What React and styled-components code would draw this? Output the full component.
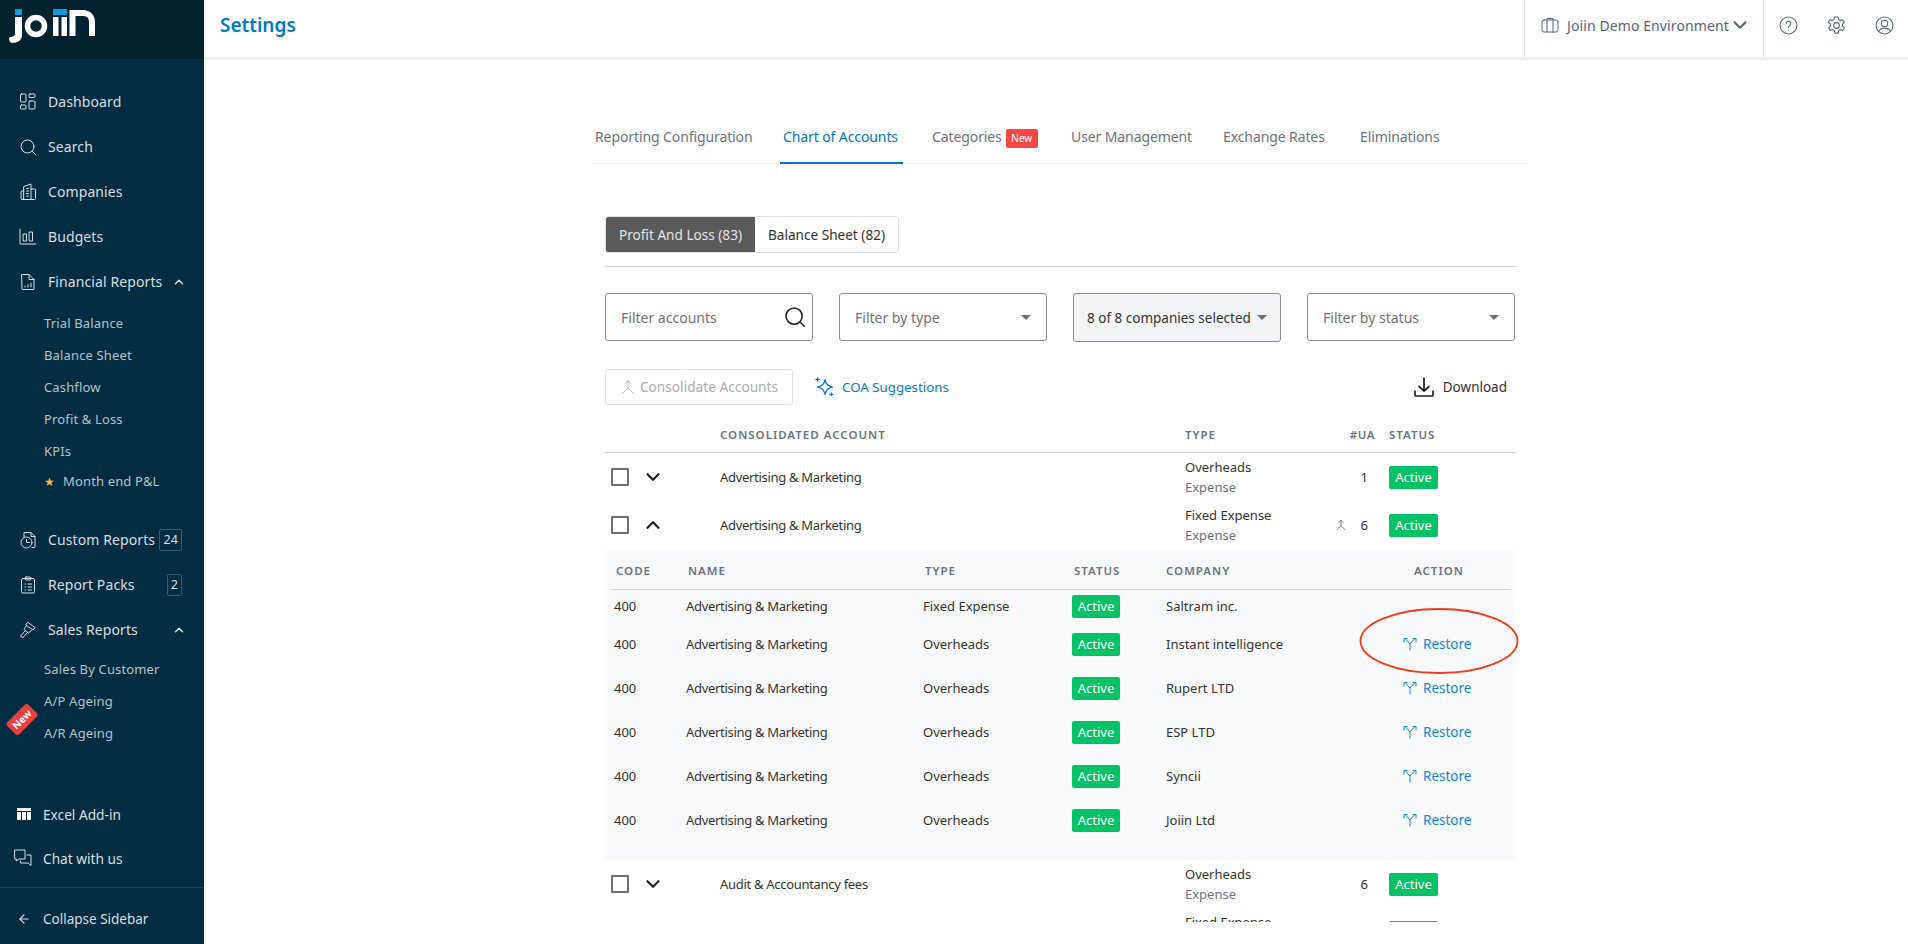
import React from 'react';
import styled, { createGlobalStyle } from 'styled-components';
import { ChevronDown, ChevronUp, ArrowLeft } from 'lucide-react';

const Global = createGlobalStyle`
  html, body { margin: 0; padding: 0; background: #fff; }
  body { font-family: "Noto Sans", "Liberation Sans", sans-serif; overflow: hidden; }
  * { box-sizing: border-box; }
`;

const Page = styled.div`
  display: flex;
  width: 1908px;
  height: 944px;
  overflow: hidden;
  position: relative;
`;

const Sidebar = styled.aside`
  width: 204px;
  flex: none;
  height: 944px;
  background: #022c42;
  display: flex;
  flex-direction: column;
`;
const LogoBar = styled.div`
  height: 59px;
  flex: none;
  background: #03222f;
`;
const NavTop = styled.nav`
  display: flex;
  flex-direction: column;
  padding-top: 20px;
`;
const NavItem = styled.div`
  height: 45px;
  display: flex;
  align-items: center;
  padding: 0 18px 0 19px;
  color: #d6dfe4;
  font-size: 14px;
  letter-spacing: 0.1px;
`;
const NavIcon = styled.span`
  width: 29px;
  flex: none;
  display: flex;
  align-items: center;
`;
const NavLabel = styled.span`
  flex: 1;
  white-space: nowrap;
`;
const Count = styled.span`
  height: 22px;
  padding: 0 3px;
  margin-right: 4px;
  border: 1px solid #3d5a6b;
  border-radius: 2px;
  font-size: 12.5px;
  line-height: 20px;
`;
const SubList = styled.div`
  display: flex;
  flex-direction: column;
  position: relative;
  margin-top: ${p => p.$mt}px;
  margin-bottom: ${p => p.$mb || 0}px;
`;
const SubItem = styled.div`
  height: ${p => p.$h || 32}px;
  display: flex;
  align-items: center;
  padding-left: 44px;
  color: #b4c2ca;
  font-size: 13px;
  letter-spacing: 0.15px;
`;
const Star = styled.span`
  color: #f5b83d;
  font-size: 12px;
  width: 19px;
  flex: none;
`;
const NewRibbon = styled.span`
  position: absolute;
  left: 7px;
  top: 58px;
  width: 30px;
  height: 17px;
  background: #e8403f;
  border-radius: 3px;
  color: #fff;
  font-size: 10px;
  font-weight: 700;
  line-height: 17px;
  text-align: center;
  transform: rotate(-45deg);
`;
const NavBottom = styled.div`
  margin-top: auto;
  display: flex;
  flex-direction: column;
`;
const FootItem = styled.div`
  height: 44px;
  display: flex;
  align-items: center;
  padding-left: ${p => p.$pad || 14}px;
  color: #d6dfe4;
  font-size: 13.7px;
`;
const FootIcon = styled.span`
  width: ${p => p.$w || 29}px;
  flex: none;
  display: flex;
  align-items: center;
`;
const Divider = styled.div`
  height: 1px;
  background: #1f4459;
  margin-top: 7px;
`;
const CollapseItem = styled(FootItem)`
  height: 56px;
  padding-top: 6px;
  padding-left: 17px;
  font-size: 13.5px;
`;

const Main = styled.main`
  flex: 1;
  display: flex;
  flex-direction: column;
  min-width: 0;
  position: relative;
`;
const TopBar = styled.header`
  height: 60px;
  flex: none;
  display: flex;
  align-items: stretch;
  border-bottom: 3px solid #edeff5;
  background: #fff;
`;
const Title = styled.h1`
  flex: 1;
  margin: 0;
  padding-left: 16px;
  font-size: 19px;
  line-height: 50px;
  font-weight: 600;
  color: #0379c3;
`;
const EnvBox = styled.div`
  width: 240px;
  flex: none;
  border-left: 1px solid #dfe1e6;
  border-right: 1px solid #dfe1e6;
  display: flex;
  align-items: center;
  gap: 8px;
  padding: 0 0 7px 16px;
  color: #55657a;
  font-size: 14px;
  letter-spacing: 0.1px;
`;
const EnvChevron = styled.span`
  display: flex;
  margin-left: -8px;
`;
const TopIcons = styled.div`
  width: 144px;
  flex: none;
  display: flex;
  align-items: center;
  gap: 29px;
  padding: 0 0 7px 15px;
  color: #55657a;
`;
const Content = styled.div`
  width: 960px;
  margin-left: 381px;
  padding: 0 29px 0 20px;
  height: 862px;
  overflow: hidden;
  flex: none;
  position: relative;
`;
const Tabs = styled.div`
  display: flex;
  height: 54px;
  margin-left: -13px;
  width: 936px;
  margin-top: 50px;
  border-bottom: 1px solid #f3f4f6;
`;
const Tab = styled.div`
  width: ${p => p.$w}px;
  flex: none;
  height: 54px;
  padding: 18px 3px 0;
  margin-right: ${p => p.$mr}px;
  display: flex;
  align-items: flex-start;
  font-size: 14px;
  letter-spacing: -0.1px;
  line-height: 18px;
  color: ${p => (p.$active ? '#0379c3' : '#6b7280')};
  border-bottom: 2px solid ${p => (p.$active ? '#0379c3' : 'transparent')};
  white-space: nowrap;
`;
const NewTag = styled.span`
  height: 19px;
  width: 32px;
  flex: none;
  margin-left: 4px;
  margin-top: 1px;
  border-radius: 2px;
  background: #f64747;
  color: #fff;
  font-size: 10px;
  letter-spacing: 0;
  line-height: 19px;
  text-align: center;
`;
const Segment = styled.div`
  display: flex;
  width: 294px;
  margin-top: 52px;
  height: 37px;
  border: 1px solid #dfe1e5;
  border-radius: 3px;
  overflow: hidden;
`;
const SegBtn = styled.div`
  width: ${p => p.$w}px;
  display: flex;
  align-items: center;
  justify-content: center;
  font-size: 13.6px;
  white-space: nowrap;
  background: ${p => (p.$active ? '#5a5a5a' : '#fff')};
  color: ${p => (p.$active ? '#e5e5e5' : '#333')};
`;
const Rule = styled.div`
  height: 1px;
  background: #d5d6dc;
  margin-top: 13px;
`;
const Filters = styled.div`
  display: grid;
  grid-template-columns: repeat(4, 208px);
  justify-content: space-between;
  width: 910px;
  margin-top: 26px;
  align-items: start;
`;
const Field = styled.div`
  height: ${p => (p.$filled ? 49 : 48)}px;
  border: 1px solid #8d8d8d;
  border-radius: 3px;
  display: flex;
  align-items: center;
  justify-content: space-between;
  padding: 0 ${p => (p.$filled ? 13 : 15)}px;
  font-size: ${p => (p.$filled ? 13.5 : 14)}px;
  background: ${p => (p.$filled ? '#f3f4f6' : '#fff')};
  color: ${p => (p.$filled ? '#333' : '#6f7377')};
`;
const LensWrap = styled.span`
  display: flex;
  margin-right: -8px;
`;
const Caret = styled.span`
  width: 0;
  height: 0;
  border-left: 5px solid transparent;
  border-right: 5px solid transparent;
  border-top: 5px solid #6b6f74;
`;
const Actions = styled.div`
  display: flex;
  align-items: center;
  margin-top: 26px;
  height: 37px;
`;
const GhostBtn = styled.div`
  width: 188px;
  height: 36px;
  border: 1px solid #e2e3e5;
  border-radius: 3px;
  display: flex;
  align-items: center;
  justify-content: center;
  gap: 4px;
  color: #a9adb0;
  font-size: 13.7px;
`;
const LinkBtn = styled.div`
  margin-left: 22px;
  display: flex;
  align-items: center;
  gap: 8px;
  color: #0a7cc7;
  font-size: 13.3px;
`;
const Download = styled.div`
  margin-left: auto;
  margin-right: 9px;
  display: flex;
  align-items: center;
  gap: 8px;
  color: #333;
  font-size: 13.5px;
`;
const Head = styled.div`
  display: grid;
  grid-template-columns: 115px 465px 130px 60px 1fr;
  height: 36px;
  margin-top: 12px;
  padding-top: 10px;
  border-bottom: 1px solid #d5d6dc;
  font-size: 11.5px;
  line-height: 16px;
  font-weight: 600;
  letter-spacing: 1px;
  color: #6b7280;
`;
const HeadUA = styled.span`
  text-align: right;
  letter-spacing: 0.5px;
`;
const HeadStatus = styled.span`
  padding-left: 14px;
`;
const Row = styled.div`
  display: grid;
  grid-template-columns: 37px 78px 465px 130px 60px 1fr;
  height: 48px;
  align-items: center;
  font-size: 13px;
  color: #333;
`;
const Check = styled.span`
  width: 18px;
  height: 18px;
  margin-left: 6px;
  border: 2px solid #6f6f6f;
  border-radius: 1px;
  display: block;
`;
const Name = styled.span`
  letter-spacing: -0.3px;
  white-space: nowrap;
`;
const TypeCell = styled.div`
  display: flex;
  flex-direction: column;
  gap: 3px;
  line-height: 17px;
`;
const Sub = styled.span`
  color: #6b7280;
`;
const UaCell = styled.div`
  display: flex;
  justify-content: flex-end;
  align-items: center;
  gap: 14px;
  padding-right: 7px;
`;
const BadgeCell = styled.div`
  display: flex;
  align-items: center;
`;
const Badge = styled.span`
  display: block;
  width: ${p => p.$w || 49}px;
  height: 23px;
  margin-left: ${p => p.$ml ?? 14}px;
  border-radius: 2px;
  background: #05c168;
  color: #fff;
  font-size: 13px;
  line-height: 23px;
  text-align: center;
`;
const Panel = styled.div`
  height: 310px;
  margin-top: 1px;
  width: 910px;
  background: #f9fafb;
  padding: 0 4px 0 6px;
`;
const InnerHead = styled.div`
  display: grid;
  grid-template-columns: 72px 237px 149px 92px 248px 1fr;
  height: 40px;
  align-items: center;
  padding: 2px 0 0 5px;
  border-bottom: 1px solid #d5d6dc;
  font-size: 11.5px;
  font-weight: 600;
  letter-spacing: 1px;
  color: #6b7280;
`;
const InnerRow = styled.div`
  display: grid;
  grid-template-columns: 72px 237px 149px 94px 237px 1fr;
  height: ${p => p.$h || 44}px;
  align-items: center;
  padding-left: 3px;
  font-size: 13px;
  color: #333;
`;
const Restore = styled.span`
  display: flex;
  align-items: center;
  gap: 6px;
  color: #1487cf;
  font-size: 13.5px;
`;
const Circle = styled.svg`
  position: absolute;
  left: 1155px;
  top: 608px;
`;

const Logo = () => (
  <svg width="100" height="50" viewBox="0 0 100 50">
    <rect x="15" y="9" width="7" height="6" fill="#0a9bd8" />
    <path d="M15 17h7v18c0 5-4 8-10 8l-2-1c-1-1-1-5 0-5 3 0 5-1 5-4z" fill="#fff" />
    <circle cx="36" cy="26" r="8.500" fill="none" stroke="#fff" strokeWidth="5.500" />
    <rect x="53" y="9" width="14" height="6" fill="#0a9bd8" />
    <rect x="53" y="17" width="5.500" height="19" fill="#fff" />
    <rect x="61.500" y="17" width="5.500" height="19" fill="#fff" />
    <path d="M69.500 36V10h13c8 0 12.500 5 12.500 12v14h-6V22c0-4-2-6-6.500-6H75.500v20z" fill="#fff" />
  </svg>
);

const S = ({ children, size = 18, sw = 1, vb = 18, color = 'currentColor' }) => (
  <svg width={size} height={size} viewBox={`0 0 ${vb} ${vb}`} fill="none" stroke={color} strokeWidth={sw} strokeLinecap="round" strokeLinejoin="round">{children}</svg>
);

const Icons = {
  dash: <S><rect x="1.500" y="1" width="5.500" height="8" rx="1"/><rect x="10" y="1" width="6" height="3.500" rx="1"/><rect x="1.500" y="12" width="5.500" height="4" rx="1"/><rect x="10" y="8" width="6" height="8" rx="1"/></S>,
  search: <S><circle cx="8.500" cy="8.500" r="6.500"/><path d="M13.500 13.500l3 3"/></S>,
  comp: <S><path d="M5 3.500l7-2.500v15.500H5zM12 6h3.500a1 1 0 0 1 1 1v8.500a1 1 0 0 1-1 1H3a1 1 0 0 1-1-1V9a1 1 0 0 1 1-1h2"/><path d="M7.500 5.500h2M7.500 8h2M7.500 10.500h2M7.500 13h2"/></S>,
  budget: <S><path d="M1 1v14.500a.5.5 0 0 0 .5.5H17"/><rect x="4.500" y="6" width="3" height="7"/><rect x="10.500" y="4" width="3" height="9"/></S>,
  report: <S><path d="M3 1.500h7l5 5v9.500a.5.5 0 0 1-.5.5h-11a.5.5 0 0 1-.5-.5zM10 1.500V6.500h5"/><path d="M6 14v-1M9 14v-2.500M12 14v-4"/></S>,
  custom: <S><path d="M5 6V1.500h7l4 4v10a1 1 0 0 1-1 1h-2M12 1.500v4h4"/><circle cx="7.500" cy="11.500" r="5.500"/><path d="M7.500 8.500v3h3"/></S>,
  packs: <S><rect x="2.500" y="2.500" width="13" height="14.500" rx="1.500"/><rect x="6" y="1" width="6" height="3" rx="1"/><path d="M6 8h.5M9 8h3.500M6 11h.5M9 11h3.500M6 14h.5M9 14h3.500"/></S>,
  sales: <S><path d="M9 1.500l7 5-2 2.500-7-5zM7.500 4.500l-2.500 4 4.500 3.500 3-2.500M6.500 9.500L1.500 15l2 2 5-5.500"/></S>,
  excel: <svg width="14" height="12" viewBox="0 0 14 12" fill="#fff"><rect x="0" y="0" width="14" height="3"/><rect x="0" y="4" width="4" height="8"/><rect x="5" y="4" width="4" height="8"/><rect x="10" y="4" width="4" height="8"/></svg>,
  chat: <S><path d="M1 1h10v9H5l-3 2 .5-2H1zM13 6h4v10.500l-3-2.500H6.500v-2"/></S>,
  briefcase: <S><rect x="1" y="4" width="16" height="12" rx="2"/><path d="M6 16V2.500h6V16"/></S>,
  help: <S size={19}><circle cx="9" cy="9" r="8"/><path d="M6.800 7a2.200 2.200 0 1 1 3.300 2c-.8.5-1.100.9-1.100 1.800"/><path d="M9 13v.2"/></S>,
  gear: <S size={19}><circle cx="9" cy="9" r="2.700"/><path d="M7.500 1h3l.5 2.300 1.700 1 2.200-.8 1.500 2.600-1.700 1.500v2l1.700 1.500-1.500 2.600-2.200-.8-1.700 1-.5 2.300h-3l-.5-2.300-1.700-1-2.200.8-1.500-2.600 1.700-1.500v-2L1.100 6.100l1.500-2.600 2.200.8 1.700-1z"/></S>,
  user: <S size={19}><circle cx="9" cy="9" r="8"/><circle cx="9" cy="7" r="3"/><path d="M3.500 14.500c1-2 3-3 5.500-3s4.500 1 5.500 3"/></S>,
  lens: <S size={20} sw={1.400} color="#222"><circle cx="8.200" cy="8.200" r="7.300"/><path d="M13.500 13.500l3.800 3.800"/></S>,
  merge: (c, s = 16) => <S size={s} color={c}><path d="M3 16l6-6 6 6M9 10V2M6 5l3-3 3 3"/></S>,
  split: <S size={14} vb={14} color="#1487cf"><path d="M7 13V7L2.500 2M7 7l4.500-5M1 5V1.500h3M13 5V1.500h-3"/></S>,
  spark: <S size={19} sw={1.200} color="#0a7cc7"><path d="M9.500 2.500c.7 4.500 2.500 6.300 7 7-4.500.7-6.300 2.500-7 7-.7-4.500-2.500-6.300-7-7 4.500-.7 6.300-2.500 7-7z"/><path d="M2.500 .8v3M1 2.300h3M15.500 15v3M14 16.500h3"/></S>,
  down: <S size={22} vb={22} sw={1.700} color="#222"><path d="M11 2v13M6 10.500l5 4.500 5-4.500M2 15v4a1 1 0 0 0 1 1h16a1 1 0 0 0 1-1v-4"/></S>,
};

const restoreRows = ['Instant intelligence', 'Rupert LTD', 'ESP LTD', 'Syncii', 'Joiin Ltd'];

const InnerValues = ({ type, company, action, h }) => (
  <InnerRow $h={h}>
    <span>400</span>
    <Name>Advertising &amp; Marketing</Name>
    <span>{type}</span>
    <BadgeCell><Badge $ml={0} $w={48}>Active</Badge></BadgeCell>
    <span>{company}</span>
    {action ? <Restore>{Icons.split}Restore</Restore> : <span />}
  </InnerRow>
);

const AccountRow = ({ name, type, ua, up, merged }) => (
  <Row>
    <Check />
    {up ? <ChevronUp size={22} strokeWidth={2.500} color="#222" /> : <ChevronDown size={22} strokeWidth={2.500} color="#222" />}
    <Name>{name}</Name>
    <TypeCell><span>{type}</span><Sub>Expense</Sub></TypeCell>
    <UaCell>{merged && Icons.merge('#444', 12)}<span>{ua}</span></UaCell>
    <BadgeCell><Badge>Active</Badge></BadgeCell>
  </Row>
);

export default function App() {
  return (
    <Page>
      <Global />
      <Sidebar>
        <LogoBar><Logo /></LogoBar>
        <NavTop>
          <NavItem><NavIcon>{Icons.dash}</NavIcon><NavLabel>Dashboard</NavLabel></NavItem>
          <NavItem><NavIcon>{Icons.search}</NavIcon><NavLabel>Search</NavLabel></NavItem>
          <NavItem><NavIcon>{Icons.comp}</NavIcon><NavLabel>Companies</NavLabel></NavItem>
          <NavItem><NavIcon>{Icons.budget}</NavIcon><NavLabel>Budgets</NavLabel></NavItem>
          <NavItem><NavIcon>{Icons.report}</NavIcon><NavLabel>Financial Reports</NavLabel><ChevronUp size={14} strokeWidth={2.500} /></NavItem>
          <SubList $mt={3} $mb={22}>
            <SubItem>Trial Balance</SubItem>
            <SubItem>Balance Sheet</SubItem>
            <SubItem>Cashflow</SubItem>
            <SubItem>Profit &amp; Loss</SubItem>
            <SubItem>KPIs</SubItem>
            <SubItem $h={28}><Star>★</Star>Month end P&amp;L</SubItem>
          </SubList>
          <NavItem><NavIcon>{Icons.custom}</NavIcon><NavLabel>Custom Reports</NavLabel><Count>24</Count></NavItem>
          <NavItem><NavIcon>{Icons.packs}</NavIcon><NavLabel>Report Packs</NavLabel><Count>2</Count></NavItem>
          <NavItem><NavIcon>{Icons.sales}</NavIcon><NavLabel>Sales Reports</NavLabel><ChevronUp size={14} strokeWidth={2.500} /></NavItem>
          <SubList $mt={1}>
            <SubItem>Sales By Customer</SubItem>
            <SubItem>A/P Ageing</SubItem>
            <SubItem>A/R Ageing</SubItem>
            <NewRibbon>New</NewRibbon>
          </SubList>
        </NavTop>
        <NavBottom>
          <FootItem $pad={17}><FootIcon $w={26}>{Icons.excel}</FootIcon>Excel Add-in</FootItem>
          <FootItem><FootIcon>{Icons.chat}</FootIcon>Chat with us</FootItem>
          <Divider />
          <CollapseItem><FootIcon $w={26}><ArrowLeft size={14} strokeWidth={2} /></FootIcon>Collapse Sidebar</CollapseItem>
        </NavBottom>
      </Sidebar>
      <Main>
        <TopBar>
          <Title>Settings</Title>
          <EnvBox>{Icons.briefcase}Joiin Demo Environment<EnvChevron><ChevronDown size={22} strokeWidth={2.200} /></EnvChevron></EnvBox>
          <TopIcons>{Icons.help}{Icons.gear}{Icons.user}</TopIcons>
        </TopBar>
        <Content>
          <Tabs>
            <Tab $w={161} $mr={27}>Reporting Configuration</Tab>
            <Tab $w={123} $mr={26} $active>Chart of Accounts</Tab>
            <Tab $w={113} $mr={26}>Categories<NewTag>New</NewTag></Tab>
            <Tab $w={125} $mr={27}>User Management</Tab>
            <Tab $w={110} $mr={27}>Exchange Rates</Tab>
            <Tab $w={90} $mr={0}>Eliminations</Tab>
          </Tabs>
          <Segment>
            <SegBtn $active $w={149}>Profit And Loss (83)</SegBtn>
            <SegBtn $w={143}>Balance Sheet (82)</SegBtn>
          </Segment>
          <Rule />
          <Filters>
            <Field>Filter accounts<LensWrap>{Icons.lens}</LensWrap></Field>
            <Field>Filter by type<Caret /></Field>
            <Field $filled>8 of 8 companies selected<Caret /></Field>
            <Field>Filter by status<Caret /></Field>
          </Filters>
          <Actions>
            <GhostBtn>{Icons.merge('#a9adb0')}Consolidate Accounts</GhostBtn>
            <LinkBtn>{Icons.spark}COA Suggestions</LinkBtn>
            <Download>{Icons.down}Download</Download>
          </Actions>
          <Head>
            <span />
            <span>CONSOLIDATED ACCOUNT</span>
            <span>TYPE</span>
            <HeadUA>#UA</HeadUA>
            <HeadStatus>STATUS</HeadStatus>
          </Head>
          <AccountRow name="Advertising & Marketing" type="Overheads" ua="1" />
          <AccountRow name="Advertising & Marketing" type="Fixed Expense" ua="6" up merged />
          <Panel>
            <InnerHead>
              <span>CODE</span><span>NAME</span><span>TYPE</span><span>STATUS</span><span>COMPANY</span><span>ACTION</span>
            </InnerHead>
            <InnerValues type="Fixed Expense" company="Saltram inc." h={32} />
            {restoreRows.map(company => (
              <InnerValues key={company} type="Overheads" company={company} action />
            ))}
          </Panel>
          <AccountRow name="Audit & Accountancy fees" type="Overheads" ua="6" />
          <AccountRow name="" type="Fixed Expense" ua="" />
        </Content>
        <Circle width="162" height="70" viewBox="0 0 162 70">
          <ellipse cx="80" cy="33" rx="78.500" ry="32" fill="none" stroke="#f03c1f" strokeWidth="1.800" />
        </Circle>
      </Main>
    </Page>
  );
}
